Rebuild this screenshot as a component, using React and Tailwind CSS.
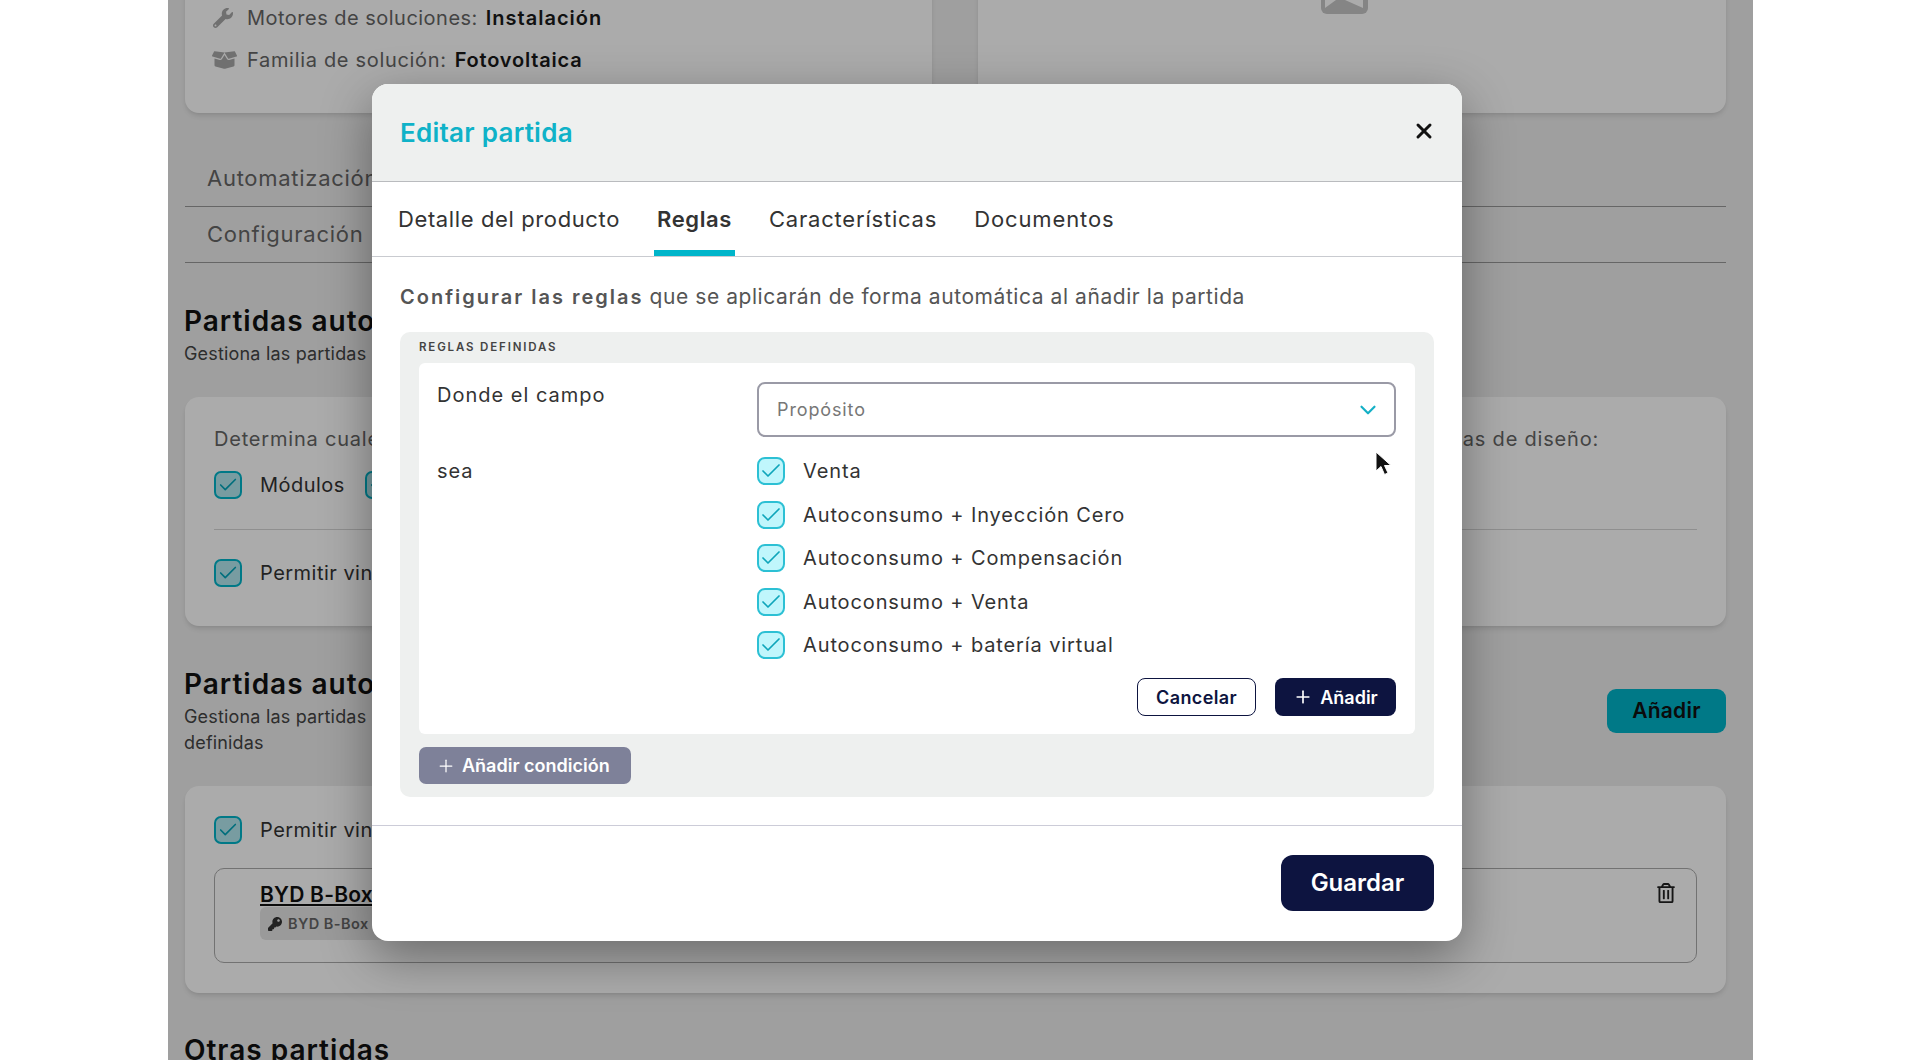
import React from 'react';
import { Check, ChevronDown, Plus, X } from 'lucide-react';
import { FaBoxOpen, FaKey, FaRegTrashAlt, FaWrench } from 'react-icons/fa';

const purposes = [
    'Venta',
    'Autoconsumo + Inyección Cero',
    'Autoconsumo + Compensación',
    'Autoconsumo + Venta',
    'Autoconsumo + batería virtual',
];

function PageCheck() {
    return (
        <span className="flex h-7 w-7 shrink-0 items-center justify-center rounded-[7px] border-2 border-[#00b5ca] bg-[#b4e9f0]">
            <Check className="h-[22px] w-[22px] text-[#00a5ba]" strokeWidth={1.8} />
        </span>
    );
}

function ModalCheck() {
    return (
        <span className="flex h-7 w-7 shrink-0 items-center justify-center rounded-[8px] border-2 border-[#2cc0d4] bg-[#c0f6fc]">
            <Check className="h-6 w-6 text-[#0ea5ba]" strokeWidth={1.7} />
        </span>
    );
}

// the page behind the dialog, dimmed by the overlay
function BackgroundPage() {
    return (
        <div className="h-full overflow-hidden bg-[#eeeeee] pl-[17px] pr-[27px] text-[#1a1a1a]">
            <div className="-mt-[100px] flex gap-[46px]">
                <div className="flex h-[213px] w-[747px] flex-col justify-end gap-[18px] rounded-[14px] bg-white pb-[41px] pl-[27px] shadow-md">
                    <div className="flex h-6 items-center text-[20px] tracking-[0.024em] text-[#666]">
                        <FaWrench className="mr-[13px] h-[20px] w-[22px] text-[#a8a8a8]" />
                        Motores de soluciones:
                        <span className="ml-2 font-semibold tracking-[0.05em] text-[#1a1a1a]">Instalación</span>
                    </div>
                    <div className="flex h-6 items-center text-[20px] tracking-[0.034em] text-[#666]">
                        <FaBoxOpen className="mr-[10px] h-[22px] w-[25px] text-[#a8a8a8]" />
                        Familia de solución:
                        <span className="ml-2 font-semibold tracking-[0.04em] text-[#1a1a1a]">Fotovoltaica</span>
                    </div>
                </div>
                <div className="flex h-[213px] flex-1 justify-center rounded-[14px] bg-white pr-[15px] shadow-md">
                    <svg className="mt-[100px] h-[14px] w-[47px]" viewBox="0 0 47 14">
                        <path d="M0 0h47v8a6 6 0 0 1-6 6H6a6 6 0 0 1-6-6z" fill="#c6c6c6" />
                        <path d="M4 0h11L4 8zM24 0h18v8z" fill="#fff" />
                    </svg>
                </div>
            </div>

            <div className="mt-[38px] flex h-14 items-center border-b border-[#999] pl-[22px] text-[22px] tracking-[0.033em] text-[#666]">
                Automatización
            </div>
            <div className="flex h-14 items-center border-b border-[#999] pl-[22px] text-[22px] tracking-[0.033em] text-[#666]">
                Configuración
            </div>

            <h2 className="mt-[40px] -ml-px text-[28px] leading-9 font-semibold tracking-[0.035em] text-[#111]">Partidas automáticas</h2>
            <p className="mt-[2px] -ml-px text-[18px] leading-[26px] tracking-[0.01em] text-[#444]">Gestiona las partidas</p>

            <div className="mt-[30px] h-[229px] rounded-[14px] bg-white px-[29px] pt-[30px] shadow-md">
                <div className="flex justify-between pr-[98px] text-[20px] leading-6 tracking-[0.04em] text-[#666]">
                    <span>Determina cuales</span>
                    <span>características de diseño:</span>
                </div>
                <div className="mt-[19px] flex items-center gap-[18px] text-[20px] tracking-[0.024em] text-[#333]">
                    <PageCheck />
                    <span className="mr-[2px]">Módulos</span>
                    <PageCheck />
                </div>
                <div className="mt-[29px] border-t border-[#d5d5d5]" />
                <div className="mt-[28px] flex items-center gap-[18px] text-[20px] tracking-[0.024em] text-[#333]">
                    <PageCheck />
                    <span>Permitir vinculación</span>
                </div>
            </div>

            <div className="mt-[40px] flex items-start justify-between">
                <div>
                    <h2 className="-ml-px text-[28px] leading-9 font-semibold tracking-[0.035em] text-[#111]">Partidas automáticas</h2>
                    <p className="mt-[2px] -ml-px text-[18px] leading-[26px] tracking-[0.01em] text-[#444]">
                        Gestiona las partidas
                        <br />
                        definidas
                    </p>
                </div>
                <button className="mt-[23px] h-[44px] w-[119px] rounded-[9px] bg-[#00b5ca] text-[21px] font-semibold tracking-[0.01em] text-[#111]">Añadir</button>
            </div>

            <div className="mt-[30px] h-[207px] rounded-[14px] bg-white px-[29px] pt-[29px] shadow-md">
                <div className="flex items-center gap-[18px] text-[20px] tracking-[0.024em] text-[#333]">
                    <PageCheck />
                    <span>Permitir vinculación</span>
                </div>
                <div className="mt-[23px] flex h-[95px] justify-between rounded-[10px] border border-[#aaa] pr-[21px] pl-[45px]">
                    <div className="pt-[12px]">
                        <div className="text-[21px] leading-7 font-semibold tracking-[0.01em] text-[#111] underline">BYD B-Box Premium</div>
                        <div className="-mt-[2px] flex h-[33px] w-[300px] items-center gap-[6px] rounded-[6px] bg-[#e6e6e6] pl-[8px] text-[14.5px] font-semibold tracking-[0.03em] text-[#666]">
                            <FaKey className="h-[14px] w-[14px] text-[#333]" />
                            BYD B-Box Premium
                        </div>
                    </div>
                    <FaRegTrashAlt className="mt-[14px] h-[20px] w-[18px] text-[#222]" />
                </div>
            </div>

            <h2 className="mt-[39px] -ml-px text-[28px] leading-9 font-semibold tracking-[0.035em] text-[#111]">Otras partidas</h2>
        </div>
    );
}

function EditDialog() {
    return (
        <div className="absolute top-[84px] left-[204px] w-[1090px] overflow-hidden rounded-[16px] bg-white text-[#222] shadow-[0_16px_50px_rgba(0,0,0,0.38)]">
            <div className="flex h-[98px] items-center justify-between border-b border-[#b9bbbe] bg-[#eef0ef] pr-[26px] pl-[28px]">
                <h1 className="-mt-px text-[26px] font-semibold tracking-[0.01em] text-[#0fb2c8]">Editar partida</h1>
                <X className="-mt-[3px] h-[24px] w-[24px] text-[#111]" strokeWidth={3} />
            </div>

            <div className="flex h-[75px] gap-[31px] border-b border-[#c9cbd0] pl-[23px] text-[22px] tracking-[0.028em]">
                <button className="flex h-full items-center px-[3px] text-[#333]">Detalle del producto</button>
                <button className="flex h-full items-center border-b-[6px] border-[#00b5ca] px-[3px] pt-[6px] font-semibold text-[#333]">Reglas</button>
                <button className="flex h-full items-center px-[3px] tracking-[0.036em] text-[#333]">Características</button>
                <button className="flex h-full items-center px-[3px] tracking-[0.04em] text-[#333]">Documentos</button>
            </div>

            <div className="px-[28px]">
                <p className="flex h-[75px] items-center pt-[5px] text-[21px] tracking-[0.027em] text-[#555]">
                    <span className="mr-[6px] text-[20px] font-semibold tracking-[0.1em]">Configurar las reglas</span>
                    que se aplicarán de forma automática al añadir la partida
                </p>

                <div className="rounded-[10px] bg-[#eef0ef] px-[19px] pt-[7px] pb-[13px]">
                    <div className="text-[11.5px] leading-[16px] font-semibold tracking-[0.16em] text-[#444]">REGLAS DEFINIDAS</div>
                    <div className="mt-[8px] rounded-[6px] bg-white pt-[19px] pr-[19px] pb-[18px] pl-[18px]">
                        <div className="grid grid-cols-[320px_1fr] text-[20px] tracking-[0.044em] text-[#333]">
                            <div className="pt-[1px] leading-6 tracking-[0.05em]">Donde el campo</div>
                            <div className="flex h-[55px] items-center justify-between rounded-[8px] border-2 border-[#9a9aa6] pr-[13px] pl-[18px] text-[18px] text-[#777]">
                                Propósito
                                <ChevronDown className="h-[26px] w-[26px] text-[#14b0c6]" strokeWidth={2} />
                            </div>
                            <div className="mt-[20px] leading-7">sea</div>
                            <div className="mt-[20px] flex flex-col gap-[15.5px]">
                                {purposes.map((item) => (
                                    <label key={item} className="flex items-center gap-[18px] leading-7">
                                        <ModalCheck />
                                        {item}
                                    </label>
                                ))}
                            </div>
                        </div>
                        <div className="mt-[19px] flex justify-end gap-[19px]">
                            <button className="h-[38px] w-[119px] rounded-[8px] border border-[#0d1440] text-[18px] font-semibold tracking-[0.02em] text-[#0d1440]">Cancelar</button>
                            <button className="flex h-[38px] w-[121px] items-center justify-center gap-[7px] rounded-[8px] bg-[#0d1440] text-[18px] font-semibold text-white">
                                <Plus className="h-[20px] w-[20px]" strokeWidth={2} />
                                Añadir
                            </button>
                        </div>
                    </div>
                    <button className="mt-[13px] flex h-[37px] w-[212px] items-center gap-[6px] rounded-[7px] bg-[#7e8199] pl-[17px] text-[18px] font-semibold text-white">
                        <Plus className="h-[20px] w-[20px]" strokeWidth={1.5} />
                        Añadir condición
                    </button>
                </div>
            </div>

            <div className="mt-[28px] flex h-[116px] items-center justify-end border-t border-[#ccccd8] pr-[28px]">
                <button className="mt-[-2px] h-[56px] w-[153px] rounded-[12px] bg-[#0d1440] text-[24px] font-semibold text-white">Guardar</button>
            </div>
        </div>
    );
}

export default function App() {
    return (
        <div className="h-[1060px] w-[1920px] overflow-hidden bg-white font-['Inter','Liberation_Sans',sans-serif]">
            <div className="relative ml-[168px] h-full w-[1585px] overflow-hidden">
                <BackgroundPage />
                <div className="absolute inset-0 bg-black/[.33]" />
                <EditDialog />
                {/* mouse pointer from the recording */}
                <svg className="absolute top-[451px] left-[1207px] h-[26px] w-[18px]" viewBox="0 0 18 26">
                    <path d="M1 1v19l5-4.5 3.5 8 3.5-1.5-3.5-7.5H16z" fill="#111" stroke="#fff" strokeWidth="1" />
                </svg>
            </div>
        </div>
    );
}
